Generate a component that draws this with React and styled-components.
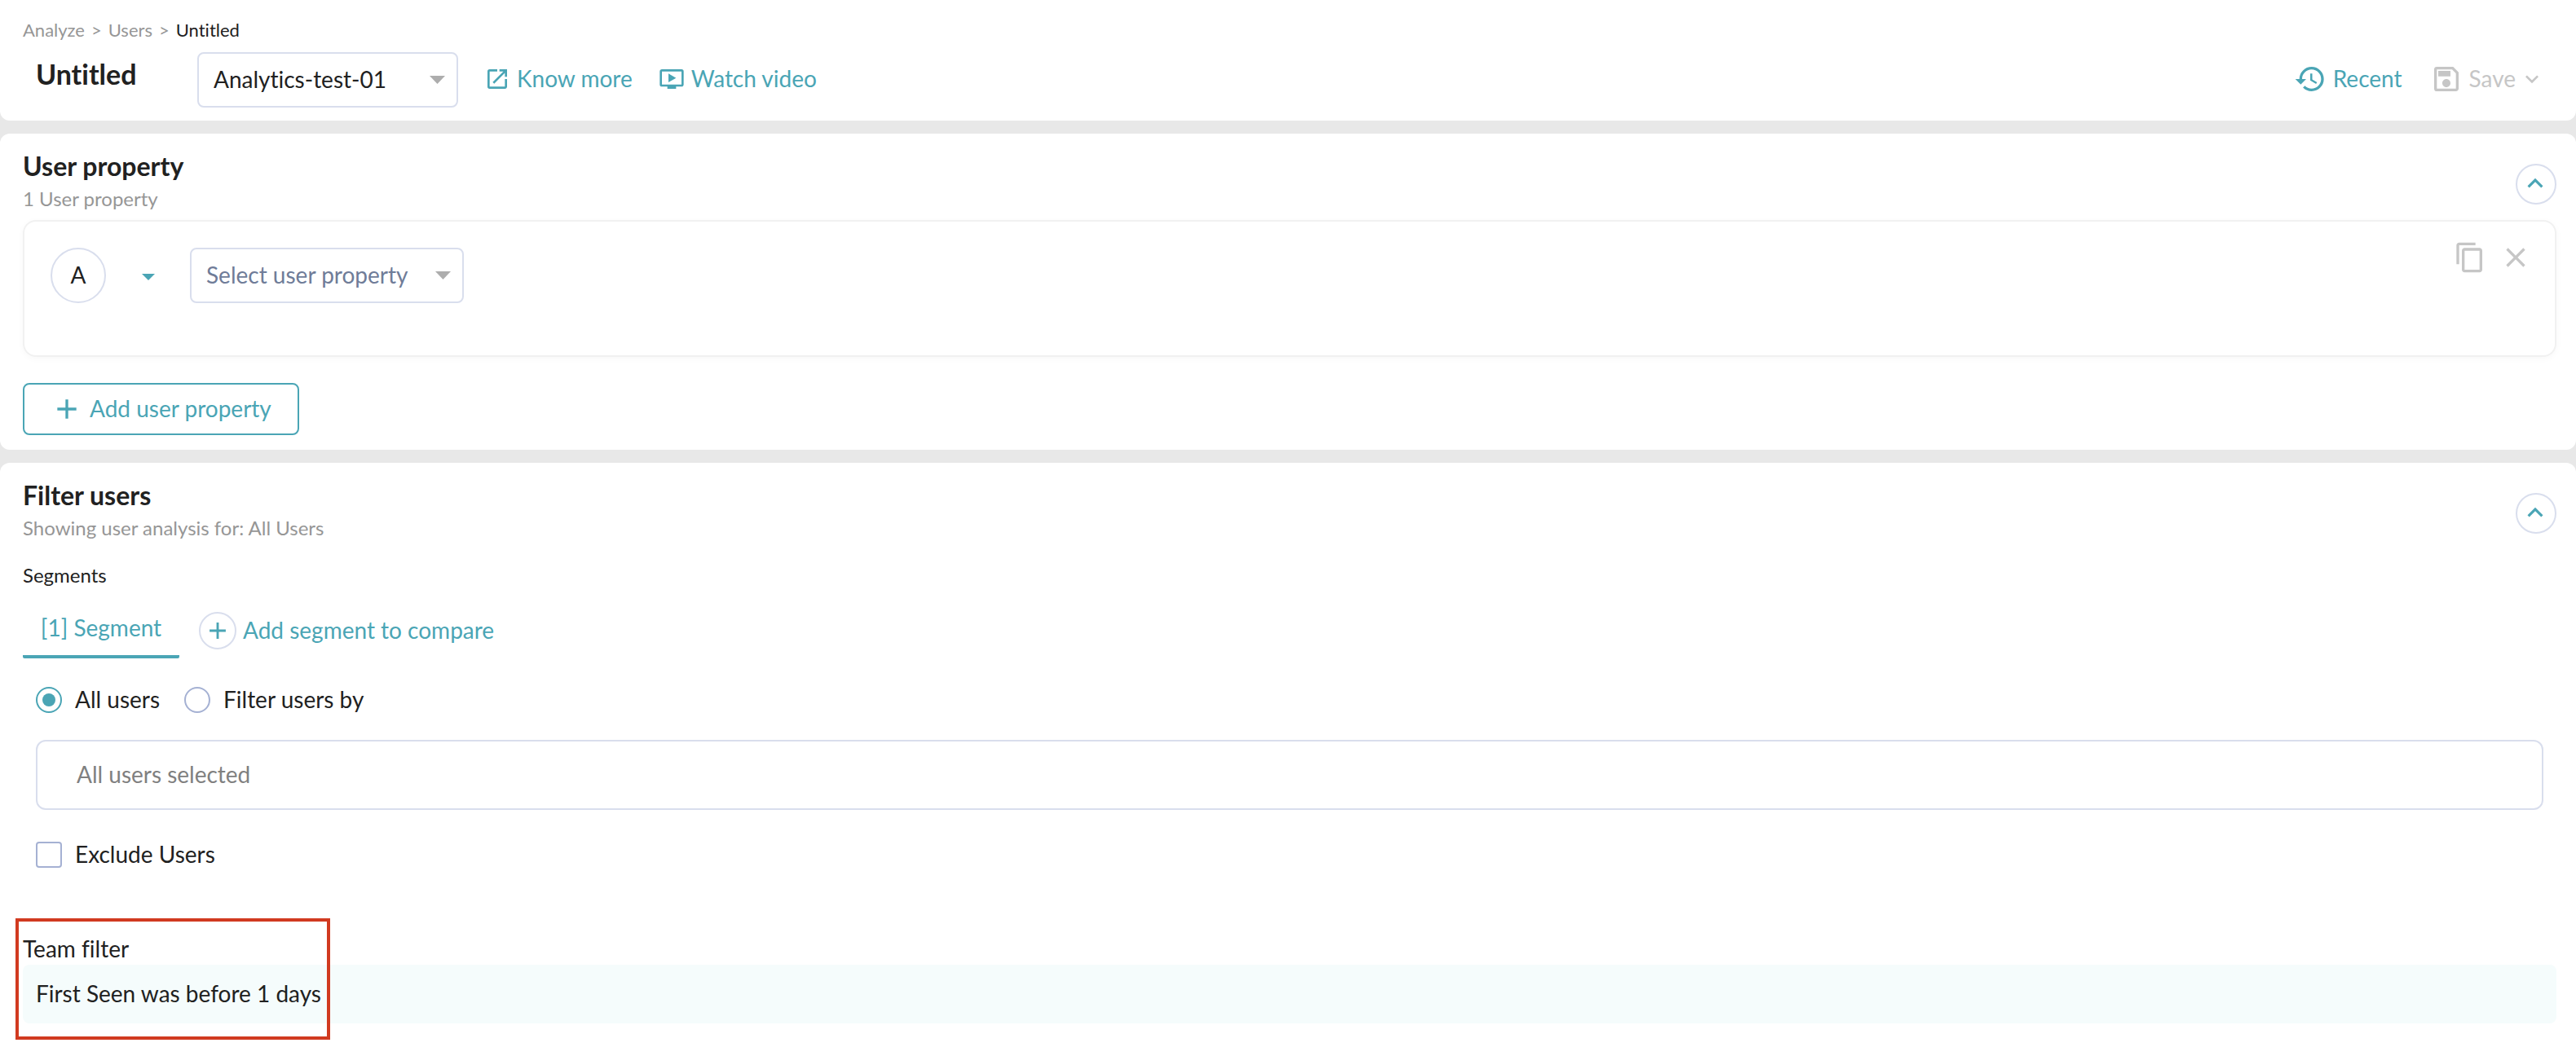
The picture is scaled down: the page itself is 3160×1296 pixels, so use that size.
import React, { useState } from 'react';
import styled, { createGlobalStyle } from 'styled-components';
import {
  MdOpenInNew,
  MdOndemandVideo,
  MdHistory,
  MdOutlineSave,
  MdKeyboardArrowDown,
  MdKeyboardArrowUp,
  MdContentCopy,
  MdClose,
  MdAdd,
} from 'react-icons/md';

const color = {
  ink: '#212121',
  muted: '#969696',
  teal: '#4aa5b5',
  disabled: '#c6c6c6',
  line: '#d9deed',
  control: '#a5b1d3',
  slate: '#6f7c98',
};

const GlobalStyle = createGlobalStyle`
  *, *::before, *::after { box-sizing: border-box; }
  body {
    margin: 0;
    background: #e8e8e8;
    color: ${color.ink};
    font: 28px/40px Lato, "Liberation Sans", sans-serif;
    font-variant-ligatures: none;
  }
  button, input, select {
    font: inherit;
    font-variant-ligatures: none;
    color: inherit;
  }
  svg { display: block; flex: none; }
`;

const Page = styled.div`
  display: flex;
  flex-direction: column;
  gap: 16px;
  min-height: 100vh;
`;

const Header = styled.header`
  padding: 23px 28px 16px;
  background: #fff;
  border-radius: 0 0 12px 12px;
`;

const Breadcrumb = styled.nav`
  display: flex;
  gap: 8px;
  margin-bottom: 13px;
  font-size: 22px;
  line-height: 28px;
  color: ${color.muted};
`;

const Crumb = styled.a`
  color: ${(p) => (p.$current ? color.ink : color.muted)};
  text-decoration: none;
`;

const HeaderRow = styled.div`
  display: flex;
  align-items: flex-start;
`;

const Title = styled.h1`
  width: 214px;
  margin: 0;
  padding-left: 16px;
  font-size: 34px;
  line-height: 54px;
  font-weight: 700;
`;

const SelectFrame = styled.span`
  display: grid;
  align-items: center;
  width: ${(p) => p.$width};
  height: 68px;

  > * { grid-area: 1 / 1; }
  > svg {
    justify-self: end;
    margin-right: 16px;
    pointer-events: none;
  }
`;

const SelectBox = styled.select`
  width: 100%;
  height: 100%;
  padding: 0 48px 2px 18px;
  appearance: none;
  border: 2px solid ${color.line};
  border-radius: 8px;
  background: #fff;
  color: ${(p) => (p.$placeholder ? color.slate : color.ink)};
`;

const ToolGroup = styled.div`
  display: flex;
  align-items: center;
  gap: ${(p) => (p.$end ? '34px' : '32px')};
  height: 66px;
  margin-left: ${(p) => (p.$end ? 'auto' : '32px')};
  padding-right: ${(p) => (p.$end ? '10px' : '0')};
`;

const Label = styled.span`
  padding-bottom: 2px;
`;

const TextLink = styled.a`
  display: flex;
  align-items: center;
  gap: 8px;
  color: ${color.teal};
  text-decoration: none;
`;

const PlainButton = styled.button`
  display: flex;
  align-items: center;
  gap: 8px;
  padding: 0;
  border: 0;
  background: none;
  color: ${(p) => (p.$muted ? color.disabled : color.teal)};
  cursor: pointer;
`;

const SaveButton = styled(PlainButton)`
  gap: 0;
  ${Label} { padding: 0 4px 2px 8px; }
`;

const Card = styled.section`
  flex: ${(p) => (p.$grow ? '1' : 'none')};
  padding: 0 ${(p) => (p.$grow ? '24px 40px 28px' : '24px 18px 28px')};
  background: #fff;
  border-radius: ${(p) => (p.$grow ? '12px 12px 0 0' : '12px')};
`;

const CardHead = styled.div`
  display: flex;
  justify-content: space-between;
  height: 106px;
  padding-top: 20px;
`;

const CardTitle = styled.h2`
  margin: 0;
  font-size: 32px;
  line-height: 40px;
  font-weight: 700;
`;

const CardNote = styled.p`
  margin: 0;
  font-size: 24px;
  line-height: 40px;
  color: ${color.muted};
`;

const RoundToggle = styled.button`
  display: grid;
  place-items: center;
  width: 50px;
  height: 50px;
  margin-top: 17px;
  padding: 0 2px 2px 0;
  border: 2px solid ${color.line};
  border-radius: 50%;
  background: #fff;
  color: ${color.teal};
`;

const Panel = styled.div`
  display: flex;
  justify-content: space-between;
  align-items: flex-start;
  min-height: 168px;
  padding: 24px 28px 24px 32px;
  border: 2px solid #f1f1f1;
  border-radius: 16px;
  box-shadow: 0 2px 8px rgba(0, 0, 0, 0.03);
`;

const PropertyRow = styled.div`
  display: flex;
  align-items: center;
  gap: 28px;
  padding-top: 8px;
`;

const Badge = styled.span`
  display: grid;
  place-items: center;
  width: 68px;
  height: 68px;
  border: 2px solid ${color.line};
  border-radius: 50%;
`;

const CaretButton = styled(PlainButton)`
  justify-content: center;
  width: 47px;
  height: 48px;
  padding-top: 4px;
`;

const PanelActions = styled.div`
  display: flex;
  gap: 16px;
`;

const OutlineButton = styled.button`
  display: flex;
  align-items: center;
  gap: 8px;
  height: 64px;
  margin-top: 32px;
  padding: 0 32px;
  border: 2px solid ${color.teal};
  border-radius: 8px;
  background: #fff;
  color: ${color.teal};
`;

const FieldTitle = styled.h3`
  margin: 0;
  padding-top: 16px;
  font-size: 24px;
  line-height: 32px;
  font-weight: 400;
`;

const TabRow = styled.div`
  display: flex;
  align-items: flex-start;
  gap: 24px;
  margin-top: 26px;
`;

const Tab = styled.button`
  min-width: 192px;
  padding: 2px 0 18px;
  border: 0;
  border-radius: 2px;
  background: linear-gradient(${color.teal}, ${color.teal}) bottom / 100% 4px no-repeat;
  color: ${color.teal};
`;

const AddSegment = styled(PlainButton)`
  height: 52px;
`;

const PlusCircle = styled.span`
  display: grid;
  place-items: center;
  width: 46px;
  height: 46px;
  border: 2px solid ${color.line};
  border-radius: 50%;
`;

const SegmentBody = styled.div`
  display: flex;
  flex-direction: column;
  padding: 32px 16px 0;
`;

const Options = styled.div`
  display: flex;
  gap: 30px;
  margin-bottom: 30px;
`;

const Choice = styled.label`
  display: flex;
  align-items: center;
  gap: 16px;
  height: 38px;
`;

const Tick = styled.input`
  display: grid;
  place-items: center;
  width: 32px;
  height: 32px;
  margin: 0;
  appearance: none;
  border: 2px solid ${color.control};
  border-radius: ${(p) => (p.type === 'radio' ? '50%' : '4px')};

  &:checked { border-color: ${color.teal}; }
  &:checked::after {
    content: '';
    width: 16px;
    height: 16px;
    border-radius: inherit;
    background: ${color.teal};
  }
`;

const Summary = styled.input`
  height: 86px;
  margin-bottom: 36px;
  padding: 0 48px 2px;
  border: 2px solid ${color.line};
  border-radius: 12px;
  background: #fff;
  color: #808080;
`;

const TeamFilter = styled.div`
  position: relative;
  margin-top: 76px;
`;

const TeamTitle = styled.h3`
  margin: 0;
  font-size: 28px;
  line-height: 40px;
  font-weight: 400;
`;

const TeamRule = styled.p`
  display: flex;
  align-items: center;
  height: 72px;
  margin: 0;
  padding: 0 16px;
  border-radius: 8px;
  background: #f5fcfc;
`;

const Highlight = styled.div`
  position: absolute;
  top: -17px;
  left: -9px;
  width: 386px;
  height: 149px;
  border: 4px solid #d13a20;
  pointer-events: none;
`;

function Triangle({ width, height, fill }) {
  return (
    <svg width={width} height={height} viewBox="0 0 20 10" preserveAspectRatio="none" aria-hidden="true">
      <path d="M0 0h20L10 10z" fill={fill} />
    </svg>
  );
}

function Select({ label, value, width, placeholder }) {
  return (
    <SelectFrame $width={width}>
      <SelectBox aria-label={label} $placeholder={placeholder}>
        <option>{value}</option>
      </SelectBox>
      <Triangle width="19" height="10" fill="#adadad" />
    </SelectFrame>
  );
}

function CardHeading({ title, note }) {
  return (
    <CardHead>
      <div>
        <CardTitle>{title}</CardTitle>
        <CardNote>{note}</CardNote>
      </div>
      <RoundToggle type="button" aria-label={`Collapse ${title}`}>
        <MdKeyboardArrowUp size={38} />
      </RoundToggle>
    </CardHead>
  );
}

export default function App() {
  const [scope, setScope] = useState('all');

  return (
    <Page>
      <GlobalStyle />
      <Header>
        <Breadcrumb aria-label="Breadcrumb">
          <Crumb href="#analyze">Analyze</Crumb>
          <span>&gt;</span>
          <Crumb href="#users">Users</Crumb>
          <span>&gt;</span>
          <Crumb href="#untitled" $current>Untitled</Crumb>
        </Breadcrumb>
        <HeaderRow>
          <Title>Untitled</Title>
          <Select label="Project" value="Analytics-test-01" width="320px" />
          <ToolGroup>
            <TextLink href="#docs">
              <MdOpenInNew size={32} />
              <Label>Know more</Label>
            </TextLink>
            <TextLink href="#video">
              <MdOndemandVideo size={32} />
              <Label>Watch video</Label>
            </TextLink>
          </ToolGroup>
          <ToolGroup $end>
            <PlainButton type="button">
              <MdHistory size={40} />
              <Label>Recent</Label>
            </PlainButton>
            <SaveButton type="button" $muted>
              <MdOutlineSave size={40} />
              <Label>Save</Label>
              <MdKeyboardArrowDown size={32} />
            </SaveButton>
          </ToolGroup>
        </HeaderRow>
      </Header>

      <Card>
        <CardHeading title="User property" note="1 User property" />
        <Panel>
          <PropertyRow>
            <Badge><Label>A</Label></Badge>
            <CaretButton type="button" aria-label="Property options">
              <Triangle width="16" height="8" fill={color.teal} />
            </CaretButton>
            <Select label="User property" value="Select user property" width="336px" placeholder />
          </PropertyRow>
          <PanelActions>
            <PlainButton type="button" aria-label="Duplicate" $muted>
              <MdContentCopy size={40} />
            </PlainButton>
            <PlainButton type="button" aria-label="Remove" $muted>
              <MdClose size={40} />
            </PlainButton>
          </PanelActions>
        </Panel>
        <OutlineButton type="button">
          <MdAdd size={40} />
          <Label>Add user property</Label>
        </OutlineButton>
      </Card>

      <Card $grow>
        <CardHeading title="Filter users" note="Showing user analysis for: All Users" />
        <FieldTitle>Segments</FieldTitle>
        <TabRow>
          <Tab type="button">[1] Segment</Tab>
          <AddSegment type="button">
            <PlusCircle><MdAdd size={34} /></PlusCircle>
            <Label>Add segment to compare</Label>
          </AddSegment>
        </TabRow>
        <SegmentBody>
          <Options>
            <Choice>
              <Tick type="radio" name="scope" checked={scope === 'all'} onChange={() => setScope('all')} />
              <Label>All users</Label>
            </Choice>
            <Choice>
              <Tick type="radio" name="scope" checked={scope === 'filter'} onChange={() => setScope('filter')} />
              <Label>Filter users by</Label>
            </Choice>
          </Options>
          <Summary aria-label="Selected users" value="All users selected" readOnly />
          <Choice>
            <Tick type="checkbox" />
            <Label>Exclude Users</Label>
          </Choice>
        </SegmentBody>
        <TeamFilter>
          <TeamTitle>Team filter</TeamTitle>
          <TeamRule><Label>First Seen was before 1 days</Label></TeamRule>
          <Highlight />
        </TeamFilter>
      </Card>
    </Page>
  );
}
